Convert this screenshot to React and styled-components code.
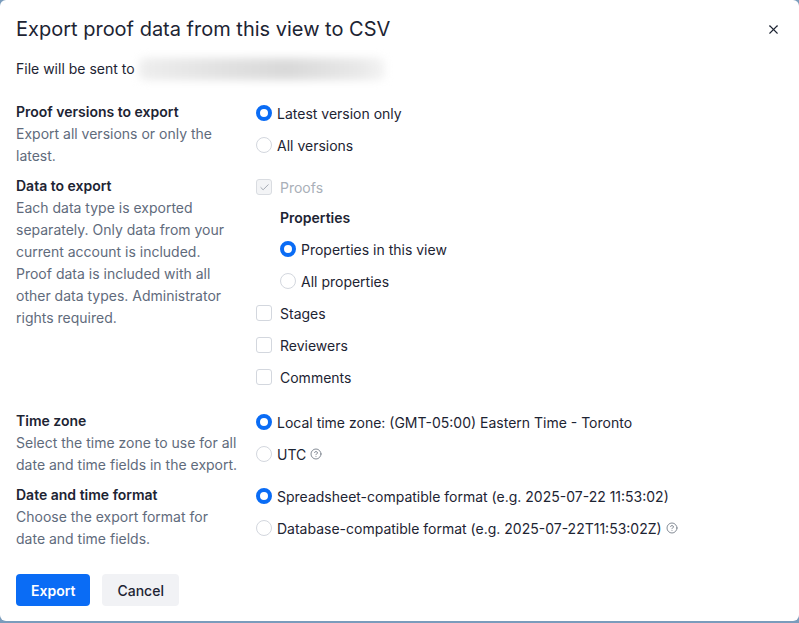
import React from 'react'
import styled, { createGlobalStyle } from 'styled-components'
import { CircleHelp, X, Check } from 'lucide-react'

const blue = '#0a6cf5'
const text = '#1d2433'
const muted = '#5f6b7c'
const line = '#d3d7de'

const GlobalStyle = createGlobalStyle`
  html, body {
    margin: 0;
    padding: 0;
    background: #7a9cbc;
    font-family: Inter, "Noto Sans", "Liberation Sans", sans-serif;
    color: ${text};
  }
`

const Dialog = styled.div`
  width: 799px;
  height: 621px;
  box-sizing: border-box;
  background: #fff;
  border-radius: 6px;
  padding: 13px 16px 0 16px;
  display: flex;
  flex-direction: column;
`

const Header = styled.div`
  display: flex;
  align-items: center;
  justify-content: space-between;
  height: 32px;
`

const Title = styled.h1`
  margin: 0;
  font-size: 20px;
  font-weight: 400;
  color: ${text};
`

const CloseButton = styled.button`
  border: none;
  background: none;
  padding: 0;
  margin-right: 2px;
  display: flex;
  color: ${text};
  cursor: pointer;
`

const Recipient = styled.div`
  display: flex;
  align-items: center;
  margin-top: 11px;
  font-size: 14px;
  height: 26px;
  line-height: 22px;
`

const HiddenEmail = styled.span`
  display: inline-block;
  width: 246px;
  height: 22px;
  margin-left: 4px;
  border-radius: 6px;
  background: linear-gradient(90deg, #eeeeee 0%, #e1e1e1 35%, #d9d9d9 60%, #e9e9e9 90%, #f4f4f4 100%);
  filter: blur(4px);
`

const Sections = styled.div`
  display: flex;
  flex-direction: column;
  gap: 8px;
  margin-top: 19px;
`

const Section = styled.div`
  display: grid;
  grid-template-columns: 224px 1fr;
  column-gap: 16px;
  align-items: start;
  padding-bottom: ${p => p.$extra || 0}px;
`

const Info = styled.div`
  font-size: 14px;
  line-height: 22px;
`

const Label = styled.div`
  font-weight: 600;
  color: ${text};
`

const Description = styled.div`
  color: ${muted};
`

const Options = styled.div`
  display: flex;
  flex-direction: column;
  gap: 8px;
  padding-left: ${p => p.$indent ? 24 : 0}px;
`

const Option = styled.label`
  display: flex;
  align-items: center;
  height: 24px;
  gap: 5px;
  font-size: 14px;
  color: ${p => p.$disabled ? '#a9afb8' : text};
`

const Radio = styled.span`
  width: 16px;
  height: 16px;
  box-sizing: border-box;
  border-radius: 50%;
  flex-shrink: 0;
  background: #fff;
  border: ${p => p.$checked ? `4.5px solid ${blue}` : `1px solid ${line}`};
`

const Box = styled.span`
  width: 16px;
  height: 16px;
  box-sizing: border-box;
  border-radius: 3px;
  flex-shrink: 0;
  margin-right: 3px;
  border: 1px solid ${p => p.$disabled ? '#d9dce1' : line};
  background: ${p => p.$disabled ? '#f3f4f6' : '#fff'};
  display: flex;
  align-items: center;
  justify-content: center;
  color: #9aa1ab;
`

const SubLabel = styled.div`
  font-size: 14px;
  font-weight: 600;
  line-height: 22px;
  color: ${text};
`

const Help = styled(CircleHelp)`
  color: #737b87;
  margin-left: -1px;
`

const Footer = styled.div`
  display: flex;
  gap: 12px;
  margin-top: 24px;
`

const Button = styled.button`
  height: 32px;
  padding: 0 15px;
  border: none;
  border-radius: 4px;
  font-family: inherit;
  font-size: 14px;
  font-weight: ${p => p.$primary ? 600 : 500};
  background: ${p => p.$primary ? blue : '#f1f2f5'};
  color: ${p => p.$primary ? '#fff' : text};
  cursor: pointer;
`

function RadioOption({ checked, children }) {
  return (
    <Option>
      <Radio $checked={checked} />
      {children}
    </Option>
  )
}

function CheckOption({ checked, disabled, children }) {
  return (
    <Option $disabled={disabled}>
      <Box $disabled={disabled}>{checked && <Check size={11} strokeWidth={2} />}</Box>
      {children}
    </Option>
  )
}

export default function App() {
  return (
    <>
      <GlobalStyle />
      <Dialog>
        <Header>
          <Title>Export proof data from this view to CSV</Title>
          <CloseButton aria-label="Close"><X size={15} strokeWidth={1.75} /></CloseButton>
        </Header>
        <Recipient>
          File will be sent to<HiddenEmail />
        </Recipient>

        <Sections>
          <Section>
            <Info>
              <Label>Proof versions to export</Label>
              <Description>Export all versions or only the latest.</Description>
            </Info>
            <Options>
              <RadioOption checked>Latest version only</RadioOption>
              <RadioOption>All versions</RadioOption>
            </Options>
          </Section>

          <Section $extra={13}>
            <Info>
              <Label>Data to export</Label>
              <Description>
                Each data type is exported separately. Only data from your current account is included. Proof data is included with all other data types. Administrator rights required.
              </Description>
            </Info>
            <Options>
              <CheckOption checked disabled>Proofs</CheckOption>
              <Options $indent>
                <SubLabel>Properties</SubLabel>
                <RadioOption checked>Properties in this view</RadioOption>
                <RadioOption>All properties</RadioOption>
              </Options>
              <CheckOption>Stages</CheckOption>
              <CheckOption>Reviewers</CheckOption>
              <CheckOption>Comments</CheckOption>
            </Options>
          </Section>

          <Section>
            <Info>
              <Label>Time zone</Label>
              <Description>Select the time zone to use for all date and time fields in the export.</Description>
            </Info>
            <Options>
              <RadioOption checked>Local time zone: (GMT-05:00) Eastern Time - Toronto</RadioOption>
              <RadioOption>UTC <Help size={12} strokeWidth={1.75} /></RadioOption>
            </Options>
          </Section>

          <Section>
            <Info>
              <Label>Date and time format</Label>
              <Description>Choose the export format for date and time fields.</Description>
            </Info>
            <Options>
              <RadioOption checked>Spreadsheet-compatible format (e.g. 2025-07-22 11:53:02)</RadioOption>
              <RadioOption>Database-compatible format (e.g. 2025-07-22T11:53:02Z) <Help size={12} strokeWidth={1.75} /></RadioOption>
            </Options>
          </Section>
        </Sections>

        <Footer>
          <Button $primary>Export</Button>
          <Button>Cancel</Button>
        </Footer>
      </Dialog>
    </>
  )
}
